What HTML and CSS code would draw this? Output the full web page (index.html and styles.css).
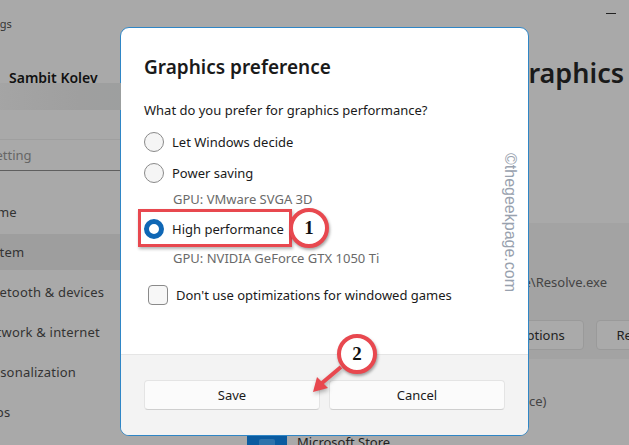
FILE: index.html
```html
<!DOCTYPE html>
<html lang="en">
<head>
    <meta charset="UTF-8">
    <meta name="viewport" content="width=device-width, initial-scale=1.0">
    <title>Graphics preference</title>
    <link rel="stylesheet" href="styles.css">
</head>
<body>
    <!-- settings window behind the dialog -->
    <div class="settings">
        <aside class="sidebar">
            <div class="app-title">Settings</div>
            <div class="user-name">Sambit Kolev</div>
            <div class="user-smear"></div>
            <div class="search">Find a setting</div>
            <nav class="nav">
                <div class="nav-item">Home</div>
                <div class="nav-item active">System</div>
                <div class="nav-item">Bluetooth &amp; devices</div>
                <div class="nav-item">Network &amp; internet</div>
                <div class="nav-item">Personalization</div>
                <div class="nav-item">Apps</div>
            </nav>
        </aside>
    </div>

    <div class="minimize"></div>
    <h2 class="page-title">Graphics</h2>
    <div class="app-panel"></div>
    <div class="app-path">Resolve\Resolve.exe</div>
    <div class="bg-btn bg-options">Options</div>
    <div class="bg-btn bg-remove">Remove</div>
    <div class="bg-device">(device)</div>
    <div class="store-tile"><span class="store-icon"></span></div>
    <div class="store-name">Microsoft Store</div>

    <!-- dialog -->
    <div class="dialog">
        <div class="dialog-body">
            <h1 class="dialog-title">Graphics preference</h1>
            <p class="question">What do you prefer for graphics performance?</p>

            <div class="option">
                <span class="radio"></span>
                <span>Let Windows decide</span>
            </div>
            <div class="option">
                <span class="radio"></span>
                <span>Power saving</span>
            </div>
            <p class="gpu">GPU: VMware SVGA 3D</p>
            <div class="option">
                <span class="radio selected"></span>
                <span>High performance</span>
            </div>
            <p class="gpu gpu-last">GPU: NVIDIA GeForce GTX 1050 Ti</p>

            <div class="check-row">
                <span class="checkbox"></span>
                <span>Don't use optimizations for windowed games</span>
            </div>
        </div>
        <div class="dialog-footer">
            <a href="#" class="btn">Save</a>
            <a href="#" class="btn">Cancel</a>
        </div>
        <div class="watermark">©thegeekpage.com</div>
    </div>
    <div class="edge-smear"></div>

    <!-- annotations on top of the screenshot -->
    <div class="red-box"></div>
    <div class="step step-1">1</div>
    <div class="step step-2">2</div>
    <svg class="arrow" width="60" height="50" viewBox="0 0 60 50">
        <path d="M31 5 L12 21" stroke="#e8484f" stroke-width="4" fill="none"/>
        <path d="M3 30 L7 15 L18 26 Z" fill="#e8484f"/>
    </svg>
</body>
</html>
```

FILE: styles.css
```css
* {
    margin: 0;
    padding: 0;
    box-sizing: border-box;
}
body {
    width: 629px;
    height: 445px;
    overflow: hidden;
    position: relative;
    background-color: #a9a9a9;
    color: #1a1a1a;
    font-family: "Noto Sans", sans-serif;
    font-size: 13px;
}

/* settings window (dimmed) */
.settings {
    position: absolute;
    top: 0;
    left: 0;
    width: 120px;
    height: 445px;
    overflow: hidden;
}
.sidebar {
    width: 200px;
    margin-left: -21px;
    display: flex;
    flex-direction: column;
}
.app-title {
    font-size: 11px;
    color: #333;
    margin-top: 16px;
    margin-left: -9px;
}
.user-name {
    font-size: 14px;
    font-weight: 600;
    color: #111;
    margin-top: 37px;
    margin-left: 30px;
    height: 20px;
}
.user-smear {
    position: relative;
    height: 27px;
    background: linear-gradient(to right, #a6a6a6, #9f9f9f 50%, #9b9f9f);
    margin-top: -5px;
}
.search {
    width: 200px;
    height: 32px;
    margin-top: 29px;
    margin-left: -38px;
    padding: 6px 8px;
    color: #666;
    border-top: 1px solid #9f9f9f;
    border-bottom: 1px solid #5f5f5f;
    font-size: 13px;
}
.nav {
    margin-top: 21px;
    display: flex;
    flex-direction: column;
}
.nav-item {
    height: 40px;
    line-height: 40px;
    color: #333;
    font-size: 13px;
    letter-spacing: 0.2px;
}
.nav-item.active {
    background-color: #9e9e9e;
    height: 36px;
    line-height: 36px;
    margin: 2px 0;
}

/* right side of the settings window */
.minimize {
    position: absolute;
    left: 606px;
    top: 13px;
    width: 10px;
    height: 1px;
    background-color: #222;
}
.page-title {
    position: absolute;
    left: 440px;
    width: 189px;
    top: 54px;
    text-align: right;
    padding-right: 5px;
    font-size: 27px;
    font-weight: 600;
    line-height: 38px;
    color: #1a1a1a;
}
.app-panel {
    position: absolute;
    left: 528px;
    top: 223px;
    width: 101px;
    height: 136px;
    background-color: #a3a3a3;
}
.app-path {
    position: absolute;
    right: 22px;
    top: 273px;
    color: #444;
    font-size: 13px;
    white-space: nowrap;
}
.bg-btn {
    position: absolute;
    top: 320px;
    height: 30px;
    line-height: 28px;
    background-color: #aaaaaa;
    border: 1px solid #9a9a9a;
    border-radius: 4px;
    color: #222;
    font-size: 13px;
    text-align: center;
}
.bg-options {
    left: 497px;
    width: 87px;
}
.bg-remove {
    left: 596px;
    width: 90px;
}
.bg-device {
    position: absolute;
    left: 500px;
    width: 45px;
    top: 392px;
    text-align: right;
    color: #444;
}
.store-tile {
    position: absolute;
    left: 247px;
    top: 435px;
    width: 40px;
    height: 10px;
    background-color: #0a5ba0;
    display: flex;
    justify-content: center;
    padding-top: 4px;
}
.store-icon {
    width: 16px;
    height: 6px;
    border-radius: 2px 2px 0 0;
    background-color: #2d72ab;
}
.store-name {
    position: absolute;
    left: 297px;
    top: 433px;
    font-size: 13px;
    line-height: 18px;
    color: #222;
}

/* dialog */
.dialog {
    position: absolute;
    left: 120px;
    top: 27px;
    width: 409px;
    height: 409px;
    background-color: white;
    border: 1px solid #2f86c6;
    border-radius: 9px;
    overflow: hidden;
    display: flex;
    flex-direction: column;
}
.dialog-body {
    flex: 1;
    padding: 26px 23px 0;
}
.dialog-title {
    font-size: 19px;
    font-weight: 600;
    line-height: 26px;
}
.question {
    margin-top: 21px;
    margin-bottom: 13px;
    line-height: 18px;
}
.option {
    display: flex;
    align-items: center;
    gap: 8px;
    height: 20px;
    margin-bottom: 11px;
}
.radio {
    width: 20px;
    height: 20px;
    border-radius: 50%;
    border: 1px solid #8a8a8a;
    background-color: #f5f5f5;
}
.radio.selected {
    border: 5px solid #0f67b5;
    background-color: white;
}
.gpu {
    margin-left: 29px;
    margin-top: -3px;
    margin-bottom: 11px;
    color: #6a6a6a;
    line-height: 17px;
}
.gpu-last {
    margin-top: 0;
    margin-bottom: 18px;
}
.check-row {
    display: flex;
    align-items: center;
    gap: 8px;
    margin-left: 4px;
    height: 20px;
}
.checkbox {
    width: 20px;
    height: 20px;
    border-radius: 4px;
    border: 1px solid #8a8a8a;
    background-color: #f7f7f7;
}
.dialog-footer {
    height: 81px;
    background-color: #f3f3f3;
    border-top: 1px solid #e5e5e5;
    padding: 25px 23px 0;
    display: flex;
    gap: 9px;
}
.btn {
    flex: 1;
    height: 30px;
    line-height: 29px;
    background-color: #fbfbfb;
    border: 1px solid #e4e4e4;
    border-bottom-color: #cfcfcf;
    border-radius: 4px;
    color: #1a1a1a;
    text-decoration: none;
    text-align: center;
}
.watermark {
    position: absolute;
    left: 398px;
    top: 125px;
    transform: rotate(90deg);
    transform-origin: left top;
    font-family: "Liberation Sans", sans-serif;
    font-size: 16px;
    line-height: 17px;
    white-space: nowrap;
    color: #98a1ae;
}
.edge-smear {
    position: absolute;
    left: 120px;
    top: 83px;
    width: 1px;
    height: 27px;
    background-color: #9b9f9f;
}

/* annotations */
.red-box {
    position: absolute;
    left: 138px;
    top: 209px;
    width: 154px;
    height: 38px;
    border: 3px solid #e8484f;
    box-shadow: 1px 2px 3px rgba(0,0,0,0.3);
}
.step {
    position: absolute;
    width: 40px;
    height: 40px;
    border-radius: 50%;
    border: 4px solid #e8484f;
    background-color: white;
    box-shadow: 1px 2px 3px rgba(0,0,0,0.35);
    font-family: "Liberation Serif", serif;
    font-weight: bold;
    font-size: 19px;
    line-height: 32px;
    text-align: center;
    color: #111;
}
.step-1 {
    left: 289px;
    top: 208px;
}
.step-2 {
    left: 337px;
    top: 334px;
}
.arrow {
    position: absolute;
    left: 310px;
    top: 362px;
    filter: drop-shadow(1px 2px 2px rgba(0,0,0,0.3));
}
```
